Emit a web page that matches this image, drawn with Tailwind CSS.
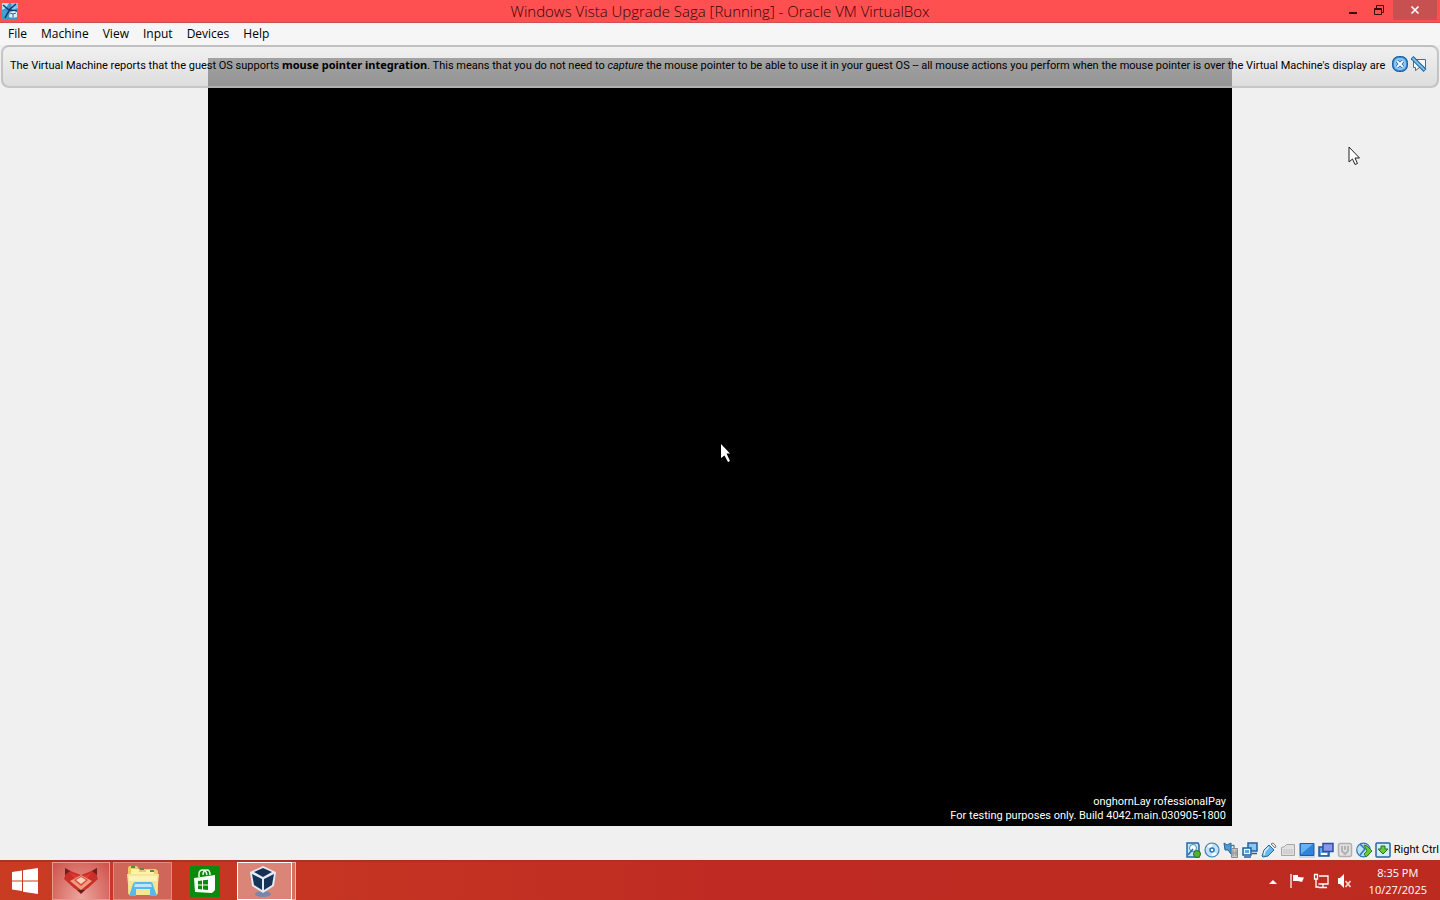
<!DOCTYPE html>
<html lang="en">
<head>
    <meta charset="UTF-8">
    <meta name="viewport" content="width=device-width, initial-scale=1.0">
    <title>Windows Vista Upgrade Saga [Running] - Oracle VM VirtualBox</title>
    <script src="https://cdn.jsdelivr.net/npm/@tailwindcss/browser@4"></script>
</head>
<body class="bg-[#f0f0f0] text-black font-['Open_Sans',sans-serif]">
    <div class="flex flex-col min-h-screen overflow-hidden">
        <!-- Title bar -->
        <header class="relative flex items-center justify-center h-[23px] bg-[#fe5050] border-b border-[#d05050]">
            <svg class="absolute left-[2px] top-[3px]" width="16" height="16" viewBox="0 0 16 16">
                <rect width="16" height="16" rx="1" fill="#3f97cb"/>
                <path d="M0 0h7L4 5 0 7z" fill="#b5e4f7"/>
                <path d="M9 0h7v5l-6 2z" fill="#7cc8ea"/>
                <path d="M1 2l6 5 8 1M14 1L8 6 3 15" stroke="#0d3c6e" stroke-width="1.500" fill="none"/>
                <path d="M0 9l4-1-2 6z" fill="#4aa3d6"/>
                <path d="M8 9l4-1 3 1v5l-4 1-4-1z" fill="#dcefff"/>
                <path d="M8 10l3 1v4M11 11l3-1" stroke="#2c62a8" fill="none"/>
            </svg>
            <h1 class="text-[15px] leading-5 font-light text-[#300404] whitespace-nowrap">Windows Vista Upgrade Saga [Running] - Oracle VM VirtualBox</h1>
            <div class="absolute right-0 top-0 flex h-5">
                <button aria-label="Minimize" class="w-[26px] flex items-center justify-center">
                    <svg width="10" height="10" viewBox="0 0 10 10"><path d="M1 7h8v2H1z" fill="#3a0c0c"/></svg>
                </button>
                <button aria-label="Restore" class="w-[27px] flex items-center justify-center">
                    <svg width="11" height="11" viewBox="0 0 11 11" fill="none" stroke="#3a0c0c"><path d="M.5 3.500h7v6h-7zM.5 4.500h7M2.500 3V.500h7v7H8"/></svg>
                </button>
                <button aria-label="Close" class="w-[44px] mr-[3px] flex items-center justify-center bg-[#c75050]">
                    <svg width="10" height="10" viewBox="0 0 10 10"><path d="M1.500 1.500l7 7M8.500 1.500l-7 7" stroke="#fff" stroke-width="1.600"/></svg>
                </button>
            </div>
        </header>

        <!-- Menu bar -->
        <nav class="flex items-center gap-3.5 h-[22px] px-2 bg-[#f6f6f6] text-xs">
            <button>File</button>
            <button>Machine</button>
            <button>View</button>
            <button>Input</button>
            <button>Devices</button>
            <button>Help</button>
        </nav>

        <!-- Machine view -->
        <main class="relative flex-1 flex items-center justify-center">
            <section class="relative w-full max-w-[1024px] aspect-[4/3] bg-black flex flex-col justify-end">
                <svg class="absolute left-1/2 top-1/2 ml-px mt-0.5" width="12" height="20" viewBox="0 0 12 20">
                    <path d="M0 0l9 9.500H5.500L9 17l-2 1-3.500-6.500L0 14z" fill="#fff"/>
                </svg>
                <p class="text-right text-white text-[11px] leading-[14px] pr-[6px] pb-[3px] font-['Roboto',sans-serif]">onghornLay rofessionalPay<br>For testing purposes only. Build 4042.main.030905-1800</p>
            </section>

            <!-- Mouse integration message -->
            <div class="absolute inset-x-px top-0 h-[43px] flex items-start justify-between pt-[9px] pl-[7px] pr-[10px] rounded-lg border-2 border-[#b4b4b4]/70 bg-linear-to-b from-[#f0f0f0]/70 to-[#d4d4d4]/70">
                <p class="text-[11px] leading-[18px] whitespace-nowrap font-['Roboto',sans-serif]">The Virtual Machine reports that the guest OS supports <b class="font-['Noto_Sans',sans-serif]">mouse pointer integration</b>. This means that you do not need to <i>capture</i> the mouse pointer to be able to use it in your guest OS -- all mouse actions you perform when the mouse pointer is over the Virtual Machine's display are</p>
                <div class="flex gap-[3px] shrink-0">
                    <button aria-label="Close message">
                        <svg width="16" height="16" viewBox="0 0 16 16">
                            <rect x=".5" y=".5" width="15" height="15" rx="6" fill="#2f86cf" stroke="#1c5f9f"/>
                            <rect x="2" y="2" width="12" height="12" rx="5" fill="#8cc8f2"/>
                            <path d="M5 5l6 6M11 5l-6 6" stroke="#1f67ad" stroke-width="3.500"/>
                            <path d="M5 5l6 6M11 5l-6 6" stroke="#fff" stroke-width="1.800"/>
                        </svg>
                    </button>
                    <button aria-label="Do not show again">
                        <svg width="16" height="16" viewBox="0 0 16 16">
                            <path d="M2.500 3.500h12v8h-6l-4 3v-3h-2z" fill="#f4f8fb" stroke="#4f6d82"/>
                            <path d="M1 1.500l13 13" stroke="#1f5f94" stroke-width="4"/>
                            <path d="M1.500 2l12 12" stroke="#7cc4f0" stroke-width="2"/>
                        </svg>
                    </button>
                </div>
            </div>

            <svg class="absolute right-[79px] top-[101px]" width="13" height="20" viewBox="0 0 13 20">
                <path d="M1 1v15l3.500-3 2.500 5.500 2.500-1L7 12h4.500z" fill="#fff" stroke="#222"/>
            </svg>
        </main>

        <!-- Status bar -->
        <footer class="flex items-center justify-end gap-[3px] h-[21px] pr-px">
            <svg width="16" height="16" viewBox="0 0 16 16">
                <path d="M2 1h11l1 2v12H2z" fill="#c6e6fa" stroke="#226aa8" stroke-width="1.500"/>
                <circle cx="8" cy="6" r="3.500" fill="#fff" stroke="#3c88c4"/>
                <path d="M3 13l5-6" stroke="#226aa8" stroke-width="1.500"/>
                <circle cx="12" cy="12" r="3.500" fill="#4fb52e" stroke="#2a6c22"/>
            </svg>
            <svg width="16" height="16" viewBox="0 0 16 16">
                <circle cx="8" cy="8" r="7" fill="#c4e2f8" stroke="#3480bc" stroke-width="1.200"/>
                <path d="M8 8L3 4a6 6 0 0 1 5-2zM8 8l5 4a6 6 0 0 1-5 2z" fill="#f4fbff"/>
                <circle cx="8" cy="8" r="2" fill="#fff" stroke="#2874b4" stroke-width="1.500"/>
            </svg>
            <svg width="16" height="16" viewBox="0 0 16 16">
                <path d="M1 1l3 2 4-2v11L5 8H2z" fill="#4e9cd6" stroke="#276496"/>
                <path d="M8 4l3-1v3" stroke="#276496" fill="none"/>
                <path d="M8.500 6.500h6v9h-6z" fill="#c4c4c4" stroke="#8b8b8b"/>
                <path d="M10 8v6M13 8v6M8 11h6" stroke="#929292"/>
            </svg>
            <svg width="16" height="16" viewBox="0 0 16 16">
                <path d="M6 1h9v8H6z" fill="#8fc4ee" stroke="#245f9c" stroke-width="1.500"/>
                <path d="M10 11.500h5" stroke="#245f9c" stroke-width="1.500"/>
                <path d="M1 6h8v7H1z" fill="#eaf6ff" stroke="#245f9c" stroke-width="1.500"/>
                <path d="M3 8h4v3H3z" fill="#5aa7e2"/><path d="M2 15h7" stroke="#245f9c" stroke-width="1.500"/>
            </svg>
            <svg width="16" height="16" viewBox="0 0 16 16">
                <path d="M10 2l2-1 3 3-1 2z" fill="#eee" stroke="#777"/>
                <path d="M8 3l5 5-6 6-5 1-1-1 2-6z" fill="#68b7ec" stroke="#24699e"/>
                <path d="M8 5L4 9l-1 4" stroke="#d7f0ff" stroke-width="1.500" fill="none"/>
            </svg>
            <svg width="16" height="16" viewBox="0 0 16 16">
                <path d="M1.500 5.500l3-1 2-2h8v11h-13z" fill="#e0e0e0" stroke="#a6a6a6"/>
                <path d="M3 7h10v5H3z" fill="#d2d2d2"/>
            </svg>
            <svg width="16" height="16" viewBox="0 0 16 16">
                <path d="M1 1.500h14v12H1z" fill="#2f83db" stroke="#1c5ca4"/>
                <path d="M2 2h12L2 12z" fill="#66b2f5"/>
                <path d="M0 15h16" stroke="#9cc5e8"/>
            </svg>
            <svg width="16" height="16" viewBox="0 0 16 16">
                <path d="M1 5h10v9H1z" fill="#5da6e8" stroke="#2352a0" stroke-width="1.500"/>
                <path d="M5 1.500h10v8H5z" fill="#8d95ef" stroke="#2352a0" stroke-width="1.500"/>
                <path d="M3 12h6" stroke="#fff" stroke-width="2"/>
            </svg>
            <svg width="16" height="16" viewBox="0 0 16 16">
                <rect x="1.500" y="1.500" width="13" height="13" rx="2" fill="#e1e1e1" stroke="#b0b0b0" stroke-width="1.500"/>
                <path d="M5 4v5l3 3 3-3V4M8 4v4" stroke="#b3b3b3" stroke-width="2" fill="none"/>
            </svg>
            <svg width="16" height="16" viewBox="0 0 16 16">
                <circle cx="7.500" cy="8" r="6.800" fill="#bce0f6" stroke="#2b76b4" stroke-width="1.200"/>
                <path d="M4 2l5 5-5 6" stroke="#2b76b4" stroke-width="1.500" fill="none"/>
                <path d="M8 3l3 1 5 5-6 6-2-3 3-3z" fill="#6cc937" stroke="#2f7d25"/>
            </svg>
            <svg width="16" height="16" viewBox="0 0 16 16">
                <rect x="1" y="1" width="14" height="14" rx="1" fill="#d5edfb" stroke="#2565a2" stroke-width="1.500"/>
                <path d="M6 4h4v3h3l-5 5-5-5h3z" fill="#6cc937" stroke="#27701d"/>
            </svg>
            <span class="text-[11px] leading-4 whitespace-nowrap font-['Roboto',sans-serif]">Right Ctrl</span>
        </footer>

        <!-- Taskbar -->
        <div class="flex items-stretch h-10 border-t-2 border-[#b03028] bg-linear-to-r from-[#c93c22] via-[#bf2b22] to-[#bd2b20] text-white">
            <button aria-label="Start" class="w-[52px] pr-0.5 flex items-center justify-center">
                <svg width="28" height="26" viewBox="0 0 28 26" fill="#fff"><path d="M1 4l10-1.500v10H1zM12 2.300L27 0v12.500H12zM1 13.500h10v9.500L1 21.500zM12 13.500h15V26l-15-2.300z"/></svg>
            </button>
            <button aria-label="Fox" class="w-[58px] flex items-center justify-center border border-[#e89a90] bg-radial-[at_50%_100%] from-[#eda79f] to-[#cd5149]">
                <svg width="34" height="26" viewBox="0 0 34 26">
                    <path d="M1 0l8 4 8 3 8-3 8-4v8l1 3-10 9-7 5-7-5L0 11l1-3z" fill="#c92f28"/>
                    <path d="M1 0l5 3-5 4zM33 0l-5 3 5 4z" fill="#6c201d"/>
                    <path d="M6 5l11 4 11-4-11 13z" fill="#dc3d31"/>
                    <path d="M6 13l11-6 11 6-11 9z" fill="#f09a80"/>
                    <path d="M10 12l7-4 7 4-7 6z" fill="#d9483a"/>
                    <path d="M17 9l5 3-5 4-5-4z" fill="#fbd0b8"/>
                    <path d="M13 22h8l-4 4z" fill="#5e201d"/>
                </svg>
            </button>
            <button aria-label="File Explorer" class="w-[59px] ml-[3px] flex items-center justify-center border border-[#e08d80] bg-[#d0655a]">
                <svg width="34" height="32" viewBox="0 0 34 32">
                    <path d="M2 3l1-2h8l2 3h17l2 2v23H2z" fill="#e9cd6a"/>
                    <path d="M5 4h8v3h7V5h8v4H5z" fill="#fff2a8"/>
                    <path d="M5 1h4v2H5zM14 3h4v2h-4zM24 5h4v2h-4z" fill="#4c8b52"/>
                    <path d="M1 9h32l-2 21H3z" fill="#f7e494"/>
                    <path d="M3 11h28v5H3z" fill="#fcf3bb"/>
                    <path d="M7 19q1-2 3-2h14q3 0 3 3l4 11h-7v-7H10v7H3z" fill="#58b9e8"/>
                    <path d="M9 19h16l1 3H8z" fill="#b9e8fb"/>
                </svg>
            </button>
            <button aria-label="Store" class="w-[65px] flex items-center justify-center">
                <svg width="30" height="31" viewBox="0 0 30 31">
                    <path d="M0 0h30v31H0z" fill="#0c8a0c"/>
                    <path d="M9 11V8q0-4 4-4 3 0 4 5M13 9q0-5 4-5 3 0 3 5" fill="none" stroke="#e6ffe6" stroke-width="1.500"/>
                    <path d="M4 12l21-3v15l-3 3-17-1z" fill="#fff"/>
                    <path d="M8 15l4-.500v4H8zM13 14.300l5-.600v4.800h-5zM8 19.500h4v4l-4-.500zM13 19.500h5V24l-5-.500z" fill="#0c8a0c"/>
                </svg>
            </button>
            <button aria-label="VirtualBox" class="w-[55px] pr-1 flex items-center justify-center border border-white bg-[#db8478]">
                <svg width="30" height="31" viewBox="0 0 30 31">
                    <ellipse cx="15" cy="28" rx="8" ry="3" fill="#7986a9"/>
                    <path d="M15 0l13 6-2 14-11 7L4 20 2 6z" fill="#e4ebf7"/>
                    <path d="M15 2l9 4-9 5-9-5z" fill="#173153"/>
                    <path d="M4 8l10 5v11l-8-5zM26 8l-10 5v11l8-5z" fill="#173457"/>
                </svg>
            </button>
            <div class="w-[4px] border-r border-y border-[#eeb7ae] bg-[#d5705f]"></div>

            <div class="ml-auto flex items-center pr-[13px]">
                <button aria-label="Show hidden icons" class="mr-3">
                    <svg width="8" height="5" viewBox="0 0 8 5"><path d="M0 5l4-4 4 4z" fill="#fff"/></svg>
                </button>
                <button aria-label="Action Center" class="mr-2">
                    <svg width="16" height="16" viewBox="0 0 16 16">
                        <path d="M2 1v14" stroke="#fff" stroke-width="1.200"/><path d="M4 2h5v2l6 .500-2 4.500-4-1H4z" fill="#fff"/>
                    </svg>
                </button>
                <button aria-label="Network" class="mr-2">
                    <svg width="16" height="16" viewBox="0 0 16 16" fill="none" stroke="#fff" stroke-width="1.300">
                        <path d="M6 3h9v8H5.500M10 11v3M6 14.500h8M1.500 1.500h3V6h-3zM3 6v8h3"/>
                    </svg>
                </button>
                <button aria-label="Muted" class="mr-4">
                    <svg width="16" height="16" viewBox="0 0 16 16">
                        <path d="M1 5h2l4-4v14l-4-4H1z" fill="#fff"/><path d="M8.500 8l5 6M13.500 8l-5 6" stroke="#ffd0c8" stroke-width="1.800"/>
                    </svg>
                </button>
                <time class="text-[11px] leading-[17px] text-center whitespace-nowrap">8:35 PM<br>10/27/2025</time>
            </div>
        </div>
    </div>
</body>
</html>
